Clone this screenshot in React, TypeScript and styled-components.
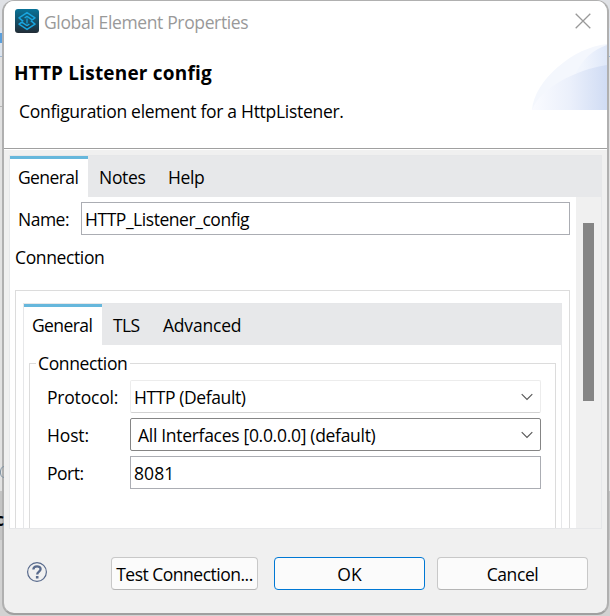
import React from "react";
import styled, { createGlobalStyle } from "styled-components";

const Global = createGlobalStyle`
  *, *::before, *::after { box-sizing: border-box; }
  body { margin: 0; background: #e3e4e6; overflow: hidden; }
  button, input { font: inherit; color: inherit; }
`;

const Desktop = styled.div`
  position: relative;
  width: 610px;
  height: 616px;
  padding: 0 1px 1px 2px;
  overflow: hidden;
  font: 17.5px/24px "Open Sans", "Noto Sans", sans-serif;
  color: #000;
  background: linear-gradient(#dfe1e5 0 28px, #dce4ee 28px 56px, #9fb8d4 56px 57px, #e2e2e2 57px 491px, #c4c4c4 491px 540px, #d2d2d2 540px);
`;

/* Slivers of the window behind the dialog */
const Peek = styled.span<{ $top: number; $height: number; $color: string }>`
  position: absolute;
  left: 0;
  width: 2px;
  top: ${(p) => p.$top}px;
  height: ${(p) => p.$height}px;
  background: ${(p) => p.$color};
`;

const PeekText = styled.span`
  position: absolute;
  left: 0;
  top: 507px;
  width: 4px;
  overflow: hidden;
  font-weight: 700;
  text-indent: -5px;
`;

const PeekRing = styled.svg`
  position: absolute;
  left: 0;
  top: 465px;
`;

const Dialog = styled.div`
  display: flex;
  flex-direction: column;
  width: 607px;
  height: 615px;
  border: 2px solid #b0b0b0;
  border-top-width: 1px;
  border-bottom-color: #a0a0a0;
  border-radius: 12px;
  background: #f0f0f0;
  overflow: hidden;
`;

const Header = styled.header`
  position: relative;
  height: 149px;
  flex: none;
  background: #fff;
  border-bottom: 1px solid #fff;
  box-shadow: inset 0 -1px #a0a0a0;
`;

const TitleBar = styled.div`
  display: flex;
  align-items: center;
  height: 40px;
  padding: 0 16px 0 11px;
  gap: 5px;
  color: #999;
  & > span { padding-top: 2px; }
  & > svg:last-child { margin-left: auto; }
`;

const Label = styled.span<{ $spacing?: number }>`
  white-space: nowrap;
  letter-spacing: ${(p) => p.$spacing ?? 0}px;
`;

const Heading = styled.h1`
  margin: 20px 0 0 10px;
  font-size: 19px;
  line-height: 24px;
  font-weight: 700;
`;

const Description = styled.p`
  margin: 14px 0 0 15px;
`;

const Swoosh = styled.svg`
  position: absolute;
  right: 0;
  top: 43px;
`;

const Folder = styled.section<{ $inner?: boolean }>`
  display: flex;
  flex-direction: column;
  flex: none;
  height: ${(p) => (p.$inner ? "240px" : "374px")};
  margin: ${(p) => (p.$inner ? "12px 7px 0" : "5px 5px 0")};
  border: 1px solid #e6e7e9;
`;

const TabBar = styled.nav`
  display: flex;
  flex: none;
  height: 41px;
  background: #e7e8ea;
`;

const Tab = styled.div<{ $active?: boolean; $width: number }>`
  width: ${(p) => p.$width}px;
  padding: 6px 0 0 ${(p) => (p.$active ? 8 : 11)}px;
  border-top: 3px solid ${(p) => (p.$active ? "#66b7dc" : "transparent")};
  background: ${(p) => (p.$active ? "#fff" : "transparent")};
`;

const Body = styled.div`
  display: flex;
  height: 331px;
  overflow: hidden;
`;

const Form = styled.div`
  width: 566px;
  padding: 5px 6px 0 5px;
  background: #fff;
  overflow: hidden;
`;

const Track = styled.div`
  width: 25px;
  padding: 26px 7px 0;
`;

const Thumb = styled.div`
  height: 178px;
  background: #858585;
`;

const Row = styled.div<{ $labelWidth: number; $indent?: number }>`
  display: grid;
  grid-template-columns: ${(p) => p.$labelWidth}px 1fr;
  align-items: center;
  height: 33px;
  & > span { padding-left: ${(p) => p.$indent ?? 0}px; }
`;

const Field = styled.input<{ $spacing: number }>`
  width: 100%;
  height: 33px;
  padding: 1px 3px 0;
  border: 1px solid #abadb3;
  background: #fff;
  outline: none;
  letter-spacing: ${(p) => p.$spacing}px;
`;

const Combo = styled.div<{ $quiet?: boolean }>`
  display: flex;
  align-items: center;
  justify-content: space-between;
  height: 33px;
  padding: 1px 7px 0 ${(p) => (p.$quiet ? 3 : 7)}px;
  border: 1px solid ${(p) => (p.$quiet ? "#ececec" : "#858585")};
  border-bottom-color: ${(p) => (p.$quiet ? "#d2d2d2" : "#858585")};
  border-radius: 2px;
`;

const SectionTitle = styled.div`
  margin-top: 10px;
  height: 24px;
`;

const Group = styled.div`
  margin-top: 21px;
  height: 260px;
  border: 1px solid #dcdcdc;
`;

const Fieldset = styled.fieldset`
  margin: 6px 5px 0;
  padding: 5px 14px 0 17px;
  min-width: 0;
  height: 210px;
  border: 1px solid #dcdcdc;
  & > legend { margin-left: -11px; padding: 0 3px 0 2px; height: 24px; }
`;

const Fields = styled.div`
  display: grid;
  gap: 5px;
`;

const Footer = styled.footer`
  display: flex;
  align-items: flex-start;
  padding: 28px 19px 0 22px;
  & > svg { margin-top: 4px; }
`;

const Button = styled.button<{ $width: number; $gap: number; $primary?: boolean }>`
  width: ${(p) => p.$width}px;
  height: 33px;
  margin: 0 0 0 ${(p) => p.$gap}px;
  padding: 1px 0 0;
  border: 1px solid ${(p) => (p.$primary ? "#0078d4" : "#c8c8c8")};
  border-bottom-color: ${(p) => (p.$primary ? "#0078d4" : "#b5b5b5")};
  border-radius: 4px;
  background: #fbfbfb;
  white-space: nowrap;
`;

const Chevron = () => (
  <svg width="12" height="8" viewBox="0 0 12 8" fill="none" stroke="#555" strokeWidth="1.1">
    <path d="M.7 1.2 6 6.5 11.3 1.2" />
  </svg>
);

const AppIcon = () => (
  <svg width="24" height="24" viewBox="0 0 24 24" fill="none">
    <defs>
      <linearGradient id="tile" x1="0" y1="0" x2="0" y2="1">
        <stop stopColor="#087399" />
        <stop offset="1" stopColor="#222c36" />
      </linearGradient>
    </defs>
    <rect width="24" height="24" rx="3" fill="url(#tile)" />
    <g stroke="#19a5df" strokeWidth="1.5" strokeLinejoin="round">
      <path d="M8.2 12.3 4 8.8 12 3.6 20 8.8 17.2 10.8 12 7.4 9.6 9" />
      <path d="M15.8 11.7 20 15.2 12 20.4 4 15.2 6.8 13.2 12 16.6 14.4 15" />
      <path d="M12 9.6v4.8" strokeWidth="1.2" />
    </g>
  </svg>
);

export default function App() {
  return (
    <Desktop>
      <Global />
      <Peek $top={33} $height={10} $color="#5a9fdc" />
      <Peek $top={106} $height={1} $color="#b5b5b5" />
      <Dialog>
        <Header>
          <TitleBar>
            <AppIcon />
            <Label $spacing={-0.36}>Global Element Properties</Label>
            <svg width="16" height="16" viewBox="0 0 16 16" stroke="#999" strokeWidth="1.3">
              <path d="M.7.7 15.3 15.3M15.3.7.7 15.3" />
            </svg>
          </TitleBar>
          <Heading><Label $spacing={0.19}>HTTP Listener config</Label></Heading>
          <Description><Label $spacing={-0.29}>Configuration element for a HttpListener.</Label></Description>
          <Swoosh width="75" height="66" viewBox="0 0 75 66">
            <defs>
              <linearGradient id="glow">
                <stop stopColor="#fafbff" />
                <stop offset=".5" stopColor="#ebf0fb" />
                <stop offset="1" stopColor="#d0dcf4" />
              </linearGradient>
              <linearGradient id="rim">
                <stop offset=".2" stopColor="#f1f5fd" />
                <stop offset="1" stopColor="#dfe8f9" />
              </linearGradient>
            </defs>
            <path d="M0 66C2 36 42 3 75 0V66Z" fill="#f4f7fd" />
            <path d="M44 29Q54 8 75 1V30Z" fill="url(#rim)" />
            <path d="M0 66C8 44 43 26 75 21V66Z" fill="url(#glow)" />
          </Swoosh>
        </Header>
        <Folder>
          <TabBar>
            <Tab $active $width={78}><Label $spacing={-0.6}>General</Label></Tab>
            <Tab $width={69}><Label $spacing={-0.3}>Notes</Label></Tab>
            <Tab $width={60}><Label $spacing={-0.4}>Help</Label></Tab>
          </TabBar>
          <Body>
            <Form>
              <Row $labelWidth={66} $indent={3}>
                <Label $spacing={-0.5}>Name:</Label>
                <Field $spacing={-0.45} defaultValue="HTTP_Listener_config" />
              </Row>
              <SectionTitle><Label $spacing={-0.37}>Connection</Label></SectionTitle>
              <Group>
                <Folder $inner>
                  <TabBar>
                    <Tab $active $width={78}><Label $spacing={-0.6}>General</Label></Tab>
                    <Tab $width={50}><Label $spacing={-0.6}>TLS</Label></Tab>
                    <Tab $width={100}><Label $spacing={-0.2}>Advanced</Label></Tab>
                  </TabBar>
                  <Fieldset>
                    <legend><Label $spacing={-0.37}>Connection</Label></legend>
                    <Fields>
                      <Row $labelWidth={83}>
                        <Label $spacing={-0.2}>Protocol:</Label>
                        <Combo $quiet><Label $spacing={-0.4}>HTTP (Default)</Label><Chevron /></Combo>
                      </Row>
                      <Row $labelWidth={83}>
                        <Label $spacing={-0.15}>Host:</Label>
                        <Combo><Label $spacing={-0.3}>All Interfaces [0.0.0.0] (default)</Label><Chevron /></Combo>
                      </Row>
                      <Row $labelWidth={83}>
                        <Label $spacing={-0.5}>Port:</Label>
                        <Field $spacing={0.1} defaultValue="8081" />
                      </Row>
                    </Fields>
                  </Fieldset>
                </Folder>
              </Group>
            </Form>
            <Track><Thumb /></Track>
          </Body>
        </Folder>
        <Footer>
          <svg width="22" height="22" viewBox="0 0 22 22" fill="none" stroke="#586a8c">
            <circle cx="11" cy="11" r="9.4" strokeWidth="1.2" />
            <path d="M7.4 8.6C7.4 4.3 14.6 4.3 14.6 8.1 14.6 10.7 11.2 10.6 11.2 13.6" strokeWidth="2.3" />
            <path d="M11.2 15.1v2.4" strokeWidth="2.6" />
          </svg>
          <Button $width={147} $gap={63}><Label $spacing={-0.5}>Test Connection...</Label></Button>
          <Button $width={151} $gap={16} $primary><Label>OK</Label></Button>
          <Button $width={151} $gap={12}><Label $spacing={-0.4}>Cancel</Label></Button>
        </Footer>
      </Dialog>
      <PeekRing width="4" height="14" viewBox="0 0 4 14" fill="none" stroke="#8295a5">
        <path d="M4 1.5C-.5 1.5-1 12.5 4 12.5" />
      </PeekRing>
      <PeekText>c</PeekText>
    </Desktop>
  );
}
